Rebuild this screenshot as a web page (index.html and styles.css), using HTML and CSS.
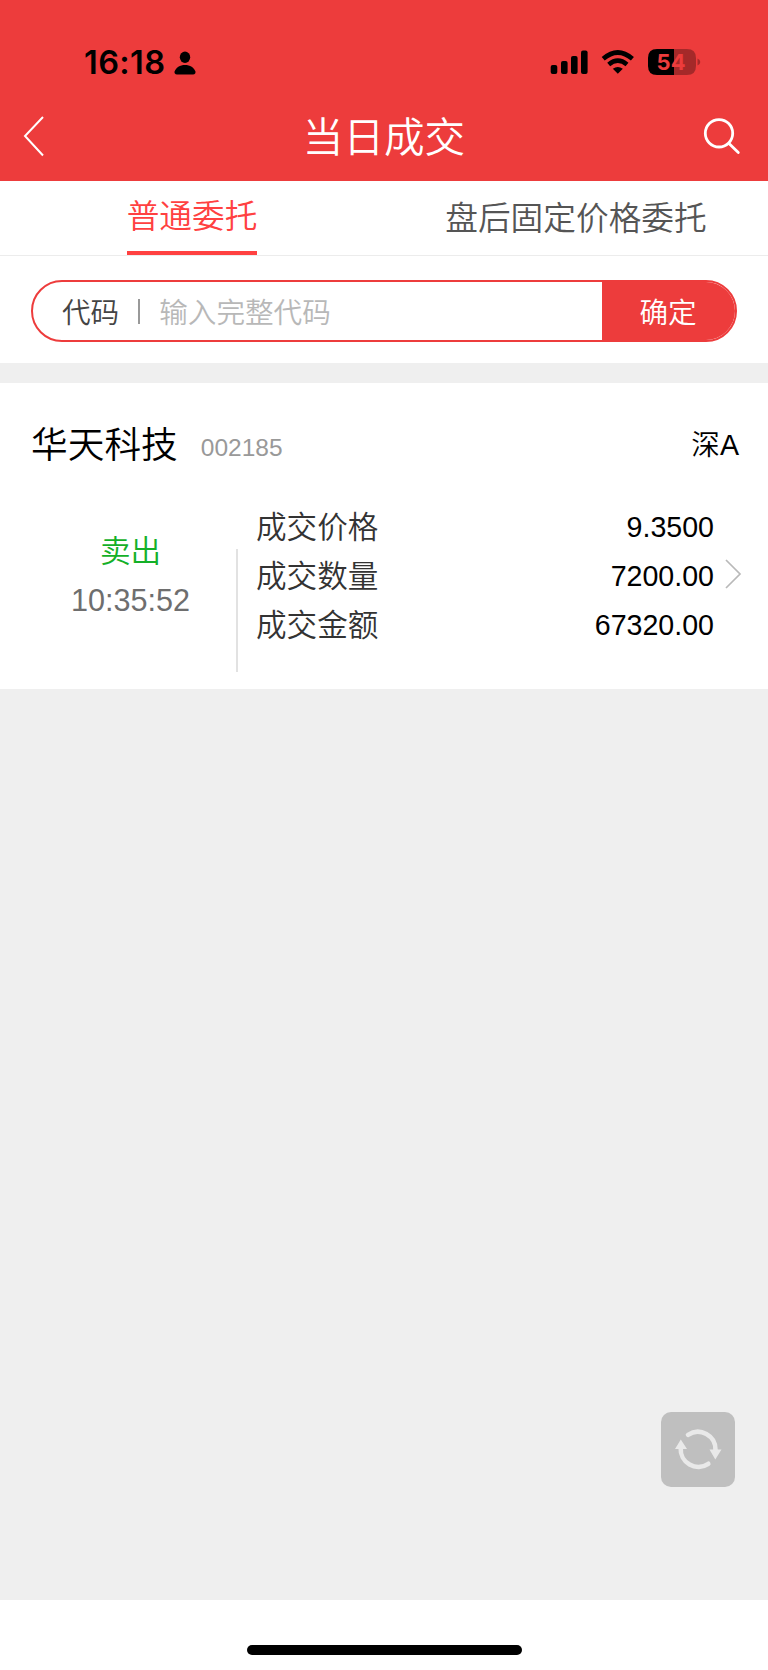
FILE: index.html
```html
<!DOCTYPE html>
<html lang="zh-CN">
<head>
<meta charset="utf-8">
<title>当日成交</title>
<link rel="stylesheet" href="styles.css">
</head>
<body>
<header class="header">
  <div class="status">
    <span class="clock">16:18</span>
    <svg class="person" width="22" height="24" viewBox="0 0 22 24"><ellipse cx="11" cy="6.200" rx="5.200" ry="5.700"/><path d="M3 23.500C1 23.500.2 22.200.6 20.600 1.700 16.700 6 14 11 14s9.300 2.700 10.400 6.600c.4 1.600-.4 2.900-2.400 2.900z"/></svg>
    <svg class="signals" width="151" height="28" viewBox="0 0 151 28">
      <rect x="0.700" y="16" width="6.600" height="9" rx="2"/><rect x="11" y="12" width="6.600" height="13" rx="2"/><rect x="21" y="7" width="6.600" height="18" rx="2"/><rect x="31" y="1.500" width="6.600" height="23.500" rx="2"/>
      <g fill="none" stroke="#000" stroke-width="4.600"><path d="M53.200 9.800Q67.800-2.800 82.400 9.800"/><path d="M58.700 15.400Q67.800 7.800 77 15.400"/></g>
      <path d="M67.800 24.800l-5-5Q67.800 16 72.800 19.800z"/>
      <path d="M107 0h17v26h-17q-9 0-9-9V9q0-9 9-9z"/>
      <path d="M124 0h13q9 0 9 9v8q0 9-9 9h-13zM147.500 9.500q2.800 1 2.800 3.500t-2.800 3.500z" fill-opacity=".3"/>
      <text x="106.600" y="21.300" class="charge">54</text>
    </svg>
  </div>
  <div class="nav">
    <svg width="24" height="44" viewBox="0 0 24 44"><path d="M21 3L3 22 21 41.500" fill="none" stroke="#fff" stroke-width="2"/></svg>
    <h1 class="title">当日成交</h1>
    <svg width="40" height="40" viewBox="0 0 40 40"><g fill="none" stroke="#fff" stroke-width="2.800" stroke-linecap="round"><circle cx="18" cy="17.300" r="13.700"/><path d="M28 27.500L37.300 36.500"/></g></svg>
  </div>
</header>
<nav class="tabs">
  <div class="tab tab-active"><span class="tab-text">普通委托</span></div>
  <div class="tab"><span class="tab-text">盘后固定价格委托</span></div>
</nav>
<section class="search">
  <div class="pill">
    <span class="code">代码</span><span class="bar"></span><span class="hint">输入完整代码</span>
    <span class="confirm">确定</span>
  </div>
</section>
<section class="card">
  <div class="card-head"><span class="name">华天科技</span><span class="number">002185</span><span class="market">深A</span></div>
  <div class="card-body">
    <div class="deal"><div class="side">卖出</div><div class="time">10:35:52</div></div>
    <div class="divider"></div>
    <div class="rows">
      <div class="row"><span class="label">成交价格</span><span>9.3500</span></div>
      <div class="row"><span class="label">成交数量</span><span>7200.00</span></div>
      <div class="row"><span class="label">成交金额</span><span>67320.00</span></div>
    </div>
    <svg class="arrow" width="18" height="32" viewBox="0 0 18 32"><path d="M2 2L16 16 2 30" fill="none" stroke="#b9b9b9" stroke-width="1.700"/></svg>
  </div>
</section>
<main class="blank">
  <div class="refresh">
    <svg width="74" height="75" viewBox="0 0 74 75"><g fill="none" stroke="#e9e9e9" stroke-width="4.600" stroke-linecap="round"><path d="M27 22.800A17.700 17.700 0 0 1 54.500 38"/><path d="M47.300 51.800A17.700 17.700 0 0 1 19.700 36"/></g><path fill="#e9e9e9" d="M48.500 37.500h12L54.300 47.500zM14 37h12L19.800 27.500z"/></svg>
  </div>
</main>
<footer class="home"><div class="home-bar"></div></footer>
</body>
</html>
```
FILE: styles.css
```css
* { box-sizing: border-box; }
body { margin: 0; width: 768px; height: 1670px; display: flex; flex-direction: column; background: #fff; color: #000; font-family: "Liberation Sans", "Noto Sans CJK SC", sans-serif; font-weight: 350; white-space: nowrap; }
svg { display: block; flex: none; }
.header { height: 181px; background: #ed3c3c; }
.status { display: flex; height: 94px; padding: 43px 67px 0 84px; }
.clock { width: 90px; font: 600 32.500px/39px Inter, sans-serif; letter-spacing: 0.4px; }
.person { margin-top: 8px; }
.signals { margin: 6px 0 0 auto; }
.charge { font: 700 22px Inter, sans-serif; fill: #ed3c3c; }
.nav { display: flex; justify-content: space-between; align-items: center; height: 83px; padding: 0 27px 0 22px; }
.title { margin: 0; padding: 0 0 2px 21px; font-family: "Noto Sans CJK SC", sans-serif; font-size: 40.600px; font-weight: 350; line-height: 60px; color: #fff; }
.tabs { display: flex; height: 75px; border-bottom: 1px solid #ececec; }
.tab { width: 50%; display: flex; justify-content: center; font-family: "Noto Sans CJK SC", sans-serif; font-size: 32.700px; line-height: 69px; color: #555; }
.tab-active { line-height: 65px; color: #ff4141; }
.tab-active .tab-text { height: 74px; border-bottom: 4px solid #ff4141; }
.search { height: 107px; padding: 24px 31px; }
.pill { display: flex; align-items: flex-start; height: 62px; border: 2px solid #ed3c3c; border-radius: 31px; overflow: hidden; padding-left: 29px; font-family: "Noto Sans CJK SC", sans-serif; font-size: 28.600px; line-height: 57px; }
.code { color: #444; }
.bar { width: 2px; height: 25px; margin: 17px 19px 0 19px; background: #999; }
.hint { color: #b8b8b8; }
.confirm { width: 133px; height: 58px; margin-left: auto; background: #ed3c3c; color: #fff; text-align: center; padding-right: 1px; }
.card { height: 326px; border-top: 20px solid #efefef; padding: 30px 29px 0 31px; }
.card-head { display: flex; align-items: flex-start; height: 76px; line-height: 60px; }
.name { margin-top: 3px; font-size: 36.700px; }
.number { margin: 5px 0 0 23px; font-size: 24.500px; color: #999; }
.market { margin: 2px 0 0 auto; font-size: 28.600px; }
.card-body { display: flex; }
.deal { width: 205px; padding: 38px 6px 0 0; text-align: center; font-size: 30.600px; line-height: 49px; color: #6e6e6e; }
.side { color: #14b028; }
.divider { width: 2px; height: 123px; margin-top: 60px; background: #e2e2e2; }
.rows { flex: 1; padding: 13.500px 10px 0 18px; }
.row { display: flex; justify-content: space-between; height: 49.300px; line-height: 49.300px; font-size: 28.600px; }
.label { font-size: 30.600px; color: #333; }
.arrow { margin-top: 69px; margin-right: -3px; }
.blank { flex: 1; background: #efefef; display: flex; justify-content: flex-end; align-items: flex-end; padding: 0 33px 113px 0; }
.refresh { width: 74px; height: 75px; border-radius: 10px; background: #bfbfbf; }
.home { height: 70px; padding-top: 45px; }
.home-bar { width: 275px; height: 10px; margin: 0 auto; border-radius: 5px; background: #000; }
```
